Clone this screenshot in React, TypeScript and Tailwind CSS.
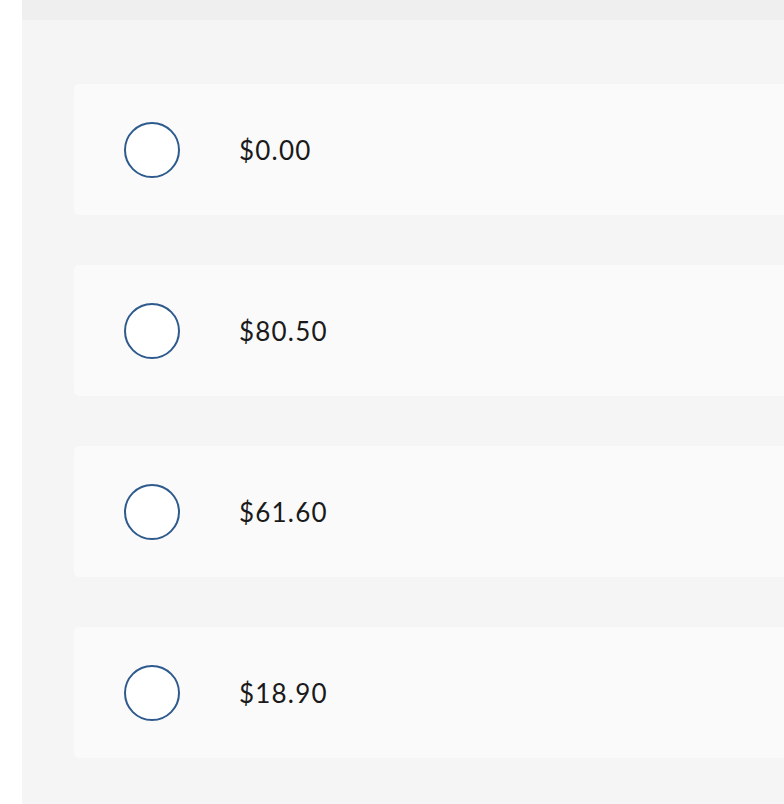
import React from "react";

const options = ["$0.00", "$80.50", "$61.60", "$18.90"];

export default function App() {
  return (
    <div className="flex h-[804px] w-[784px] overflow-hidden bg-white" style={{ fontFamily: "Lato, 'Open Sans', sans-serif" }}>
      <div className="w-[22px] shrink-0 bg-white" />
      <div className="flex flex-1 flex-col bg-[#f5f5f5]">
        <div className="h-[20px] shrink-0 bg-[#efefef]" />
        <div className="flex flex-col gap-[50px] pl-[52px] pt-[64px]">
          {options.map((o) => (
            <div key={o} className="flex h-[131px] items-center rounded-l-[5px] bg-[#fafafa] pl-[50px]">
              <div className="h-[56px] w-[56px] shrink-0 rounded-full border-2 border-[#2e5a8e] bg-white" />
              <span className="ml-[59px] pt-[2px] text-[26px] tracking-[1.2px] text-[#1a1a1a]">{o}</span>
            </div>
          ))}
        </div>
      </div>
    </div>
  );
}
